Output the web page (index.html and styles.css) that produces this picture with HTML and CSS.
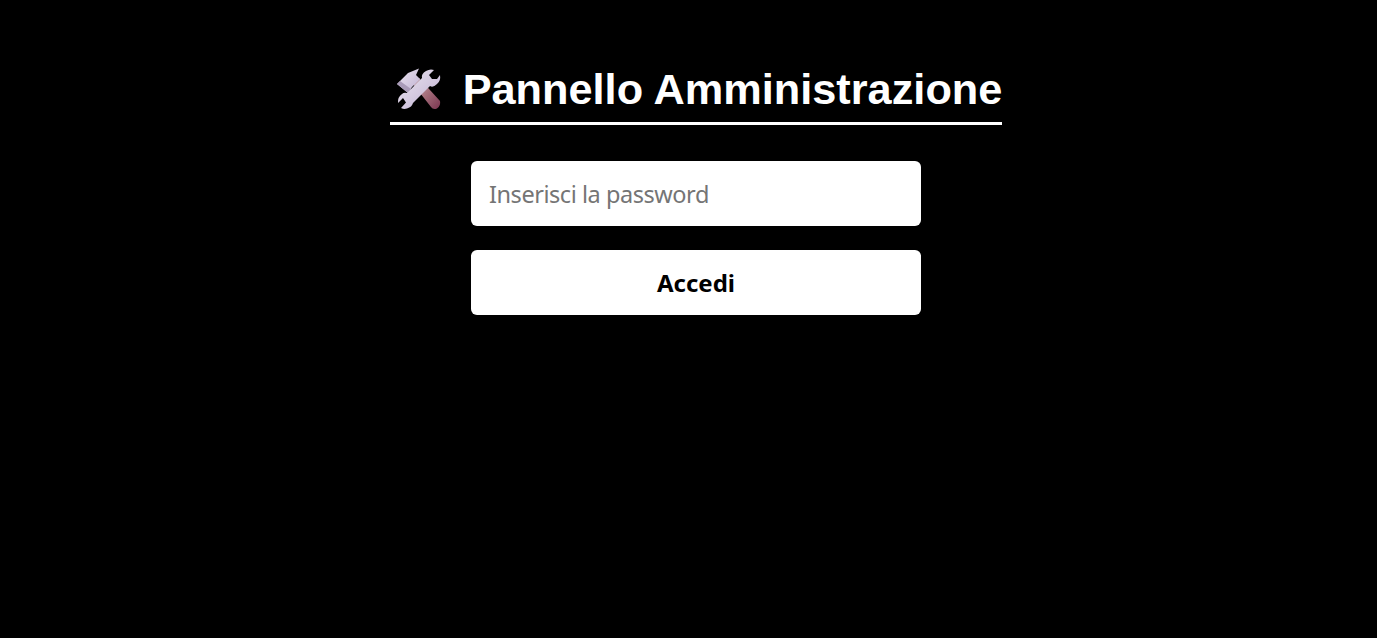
FILE: index.html
```html
<!DOCTYPE html>
<html lang="en">
<head>
    <meta charset="UTF-8">
    <meta name="viewport" content="width=device-width, initial-scale=1.0">
    <title>Pannello Amministrazione</title>
    <link rel="stylesheet" href="styles.css">
</head>
<body>
    <div class="container">
        <h1 class="title">
            <svg class="title-icon" viewBox="0 0 48 48" width="48" height="48" aria-hidden="true">
                <defs>
                    <linearGradient id="handle" x1="0" y1="0" x2="1" y2="1">
                        <stop offset="0" stop-color="#c9b2c0"/>
                        <stop offset="0.5" stop-color="#a5707c"/>
                        <stop offset="1" stop-color="#7a3550"/>
                    </linearGradient>
                    <linearGradient id="steel" x1="0" y1="0" x2="1" y2="1">
                        <stop offset="0" stop-color="#ece6f0"/>
                        <stop offset="1" stop-color="#bfb0d2"/>
                    </linearGradient>
                </defs>
                <path d="M17 18 L23 12 L44 35 Q45 40 41 42.500 Q37 44 35 41 Z" fill="url(#handle)"/>
                <path d="M1 18 L12 7 L23 2.500 L20 9 L24 13 L16 21 L12 27 Z" fill="url(#steel)"/>
                <path d="M1 18 L4 15 L15 23 L12 27 Z" fill="#a99bb8"/>
                <path d="M38 4 L33 9 L36 13 L41 13 L44 9 Q45 15 41 18 Q37 22 34 20 L17 37 Q16 41 11 42.500 Q8 43.500 5 42 L10 36.500 L7 32 L2 37 Q1.500 31 6 28 Q8 26 11 27 L26 12 Q25 8 30 5 Q34 2.500 38 4 Z" fill="url(#steel)"/>
            </svg>
            <span>Pannello Amministrazione</span>
        </h1>
        <form class="login-form">
            <input class="field" type="password" placeholder="Inserisci la password">
            <button class="submit" type="button">Accedi</button>
        </form>
    </div>
</body>
</html>
```

FILE: styles.css
```css
html, body {
    height: 100%;
}
body {
    margin: 0;
    padding-left: 15px;
    background: #000;
    color: #fff;
    font-family: "Liberation Sans", Arial, sans-serif;
}
.container {
    display: flex;
    flex-direction: column;
    align-items: center;
    padding-top: 60px;
}
.title {
    display: flex;
    align-items: center;
    gap: 19px;
    margin: 0 0 36px;
    padding: 0 0 3px 6px;
    border-bottom: 3px solid #fff;
    font-size: 43.300px;
    font-weight: bold;
    line-height: 59px;
}
.title-icon {
    display: block;
}
.login-form {
    display: flex;
    flex-direction: column;
    gap: 24px;
    width: 450px;
}
.field,
.submit {
    box-sizing: border-box;
    width: 100%;
    height: 65px;
    border: none;
    border-radius: 6px;
    background: #fff;
    font-family: "Noto Sans", Tahoma, sans-serif;
}
.field {
    padding: 0 18px;
    font-size: 23.500px;
    letter-spacing: -0.450px;
}
.field::placeholder {
    color: #757575;
}
.submit {
    color: #000;
    font-size: 24px;
    font-weight: bold;
    cursor: pointer;
}
```
